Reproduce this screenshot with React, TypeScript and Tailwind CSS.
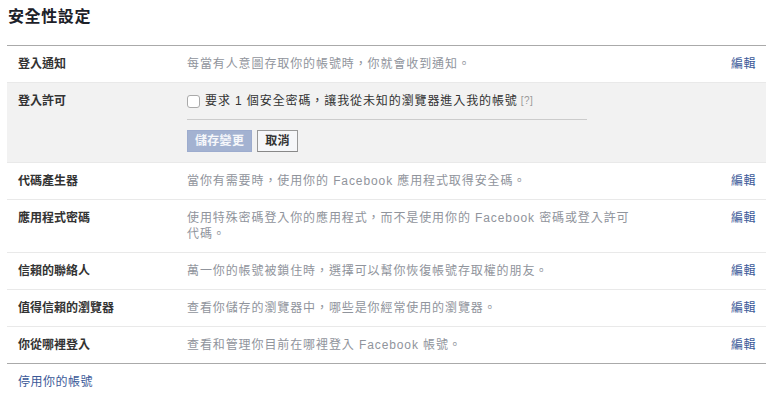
const font = { fontFamily: '"Liberation Sans", "Noto Sans CJK TC", sans-serif' }

type Row = { label: string; desc: string }

const topRows: Row[] = [
  { label: '登入通知', desc: '每當有人意圖存取你的帳號時，你就會收到通知。' },
]

const restRows: Row[] = [
  { label: '代碼產生器', desc: '當你有需要時，使用你的 Facebook 應用程式取得安全碼。' },
  {
    label: '應用程式密碼',
    desc: '使用特殊密碼登入你的應用程式，而不是使用你的 Facebook 密碼或登入許可代碼。',
  },
  { label: '信賴的聯絡人', desc: '萬一你的帳號被鎖住時，選擇可以幫你恢復帳號存取權的朋友。' },
  { label: '值得信賴的瀏覽器', desc: '查看你儲存的瀏覽器中，哪些是你經常使用的瀏覽器。' },
  { label: '你從哪裡登入', desc: '查看和管理你目前在哪裡登入 Facebook 帳號。' },
]

function SettingRow({ label, desc, first }: Row & { first?: boolean }) {
  return (
    <li
      className={
        first
          ? 'flex pl-[11px] pr-[10px] py-[10px] text-[12px] leading-[16px]'
          : 'flex border-t border-[#e9e9e9] pl-[11px] pr-[10px] py-[10px] text-[12px] leading-[16px]'
      }>
      <div className="w-[169px] shrink-0 font-bold text-[#333]">{label}</div>
      <div className="w-[450px] shrink-0 tracking-[0.9px] text-[#90949c]">{desc}</div>
      <a href="#" className="ml-auto tracking-[0.5px] text-[#3b5998]">
        編輯
      </a>
    </li>
  )
}

export default function App() {
  return (
    <div className="min-h-screen bg-white pl-[7px] pr-[8px]" style={font}>
      <h2 className="pl-[1px] pt-[7px] pb-[18px] text-[16px] leading-[20px] tracking-[0.6px] font-bold text-[#1d2129]">
        安全性設定
      </h2>
      <ul className="border-t border-b border-[#aaa]">
        {topRows.map(r => (
          <SettingRow key={r.label} first {...r} />
        ))}
        <li className="flex border-t border-[#e9e9e9] bg-[#f2f2f2] pl-[11px] pr-[10px] pt-[10px] pb-[10px] text-[12px] leading-[16px]">
          <div className="w-[169px] shrink-0 font-bold text-[#333]">登入許可</div>
          <div className="w-[400px]">
            <label className="flex items-center whitespace-nowrap tracking-[0.9px] text-[#333]">
              <input
                type="checkbox"
                className="mr-[5px] h-[13px] w-[13px] appearance-none rounded-[3px] border border-[#aaa] bg-white"
              />
              要求 1 個安全密碼，讓我從未知的瀏覽器進入我的帳號
              <span className="ml-[3px] text-[10px] tracking-[0.5px] text-[#999]">[?]</span>
            </label>
            <div className="mt-[10px] border-t border-[#ccc]" />
            <div className="mt-[10px] flex gap-[5px]">
              <button className="h-[22px] border border-[#9dacce] bg-[#a3b2d1] px-[7px] text-[12px] tracking-[0.3px] font-bold text-white/90">
                儲存變更
              </button>
              <button className="h-[22px] border border-[#999] border-b-[#888] bg-[#f6f7f9] px-[7px] text-[12px] tracking-[0.3px] font-bold text-[#333]">
                取消
              </button>
            </div>
          </div>
        </li>
        {restRows.map(r => (
          <SettingRow key={r.label} {...r} />
        ))}
      </ul>
      <div className="pl-[11px] pt-[10px] text-[12px] leading-[16px] tracking-[0.5px]">
        <a href="#" className="text-[#3b5998]">
          停用你的帳號
        </a>
      </div>
    </div>
  )
}
